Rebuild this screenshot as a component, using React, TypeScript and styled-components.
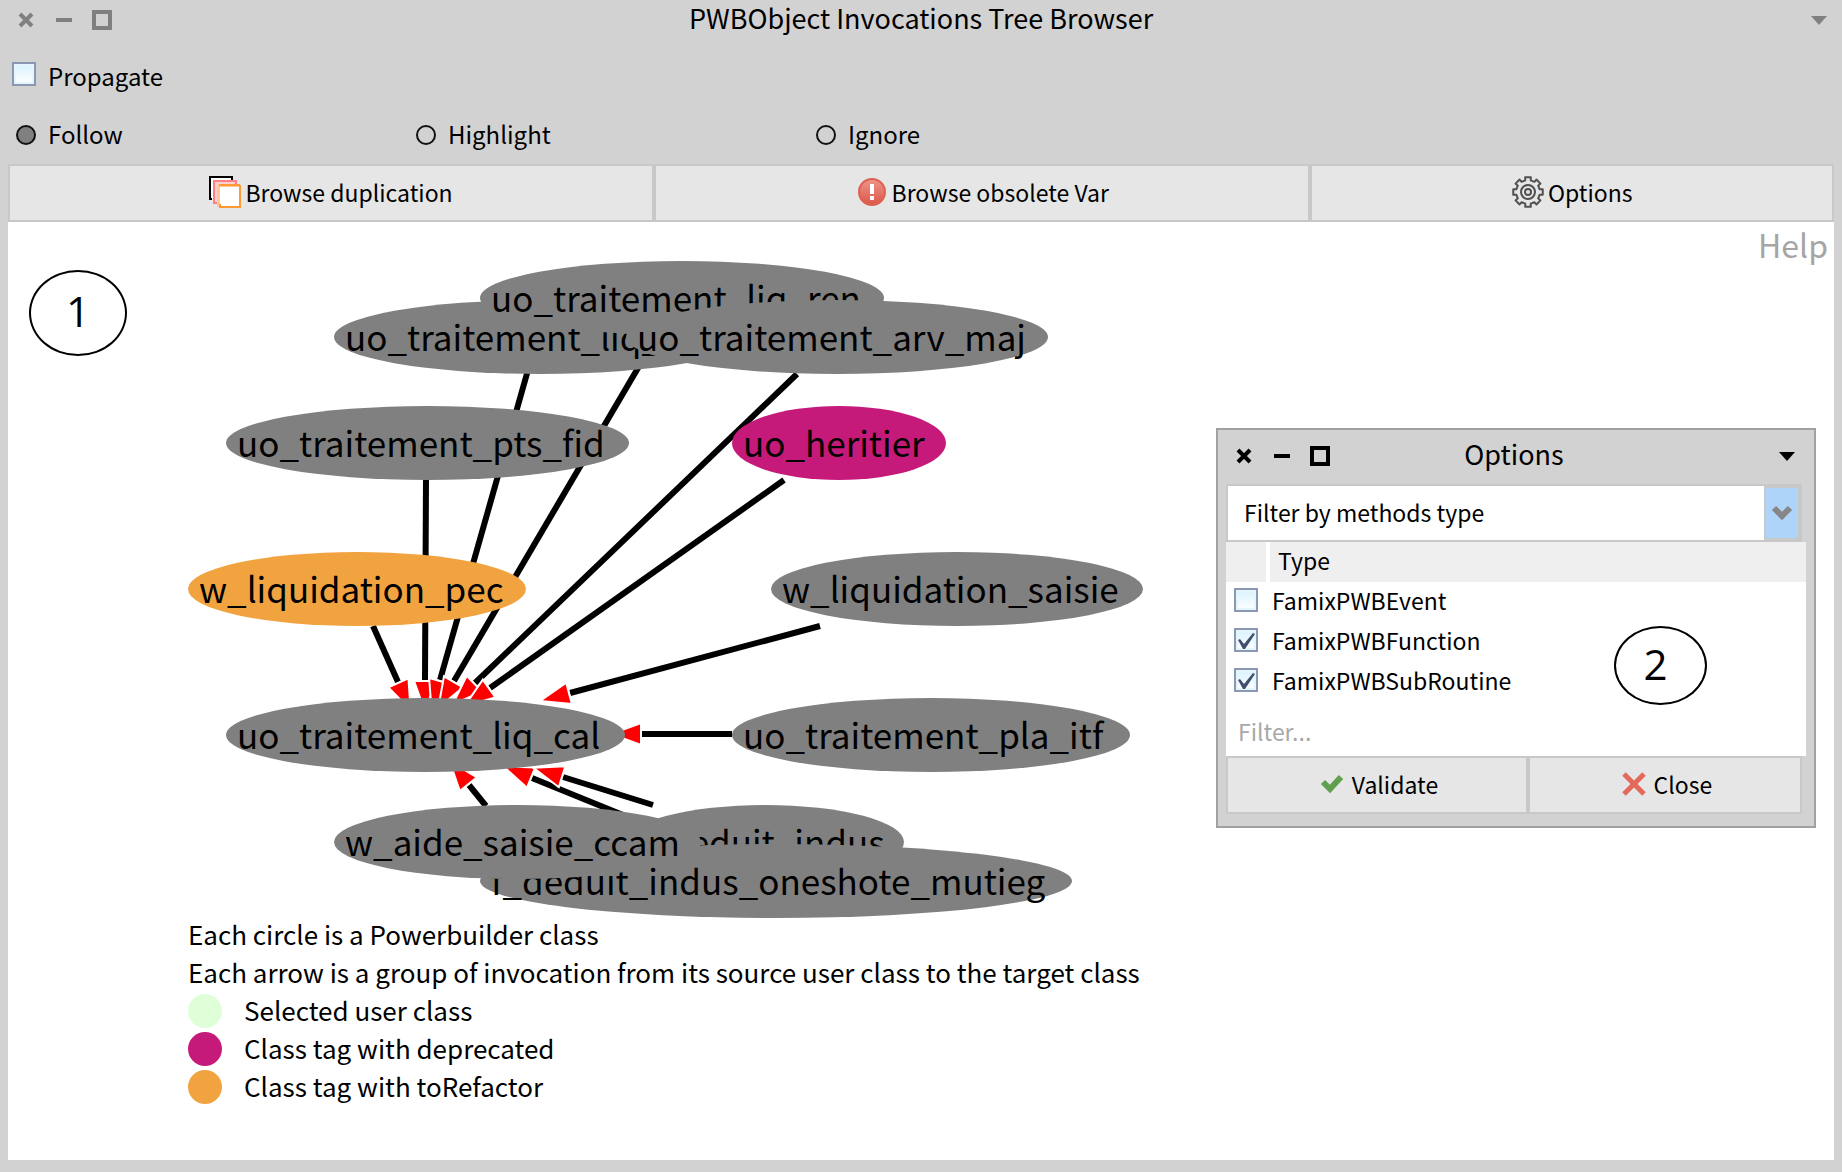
import React, { useState } from "react";
import styled, { createGlobalStyle } from "styled-components";

const GlobalStyle = createGlobalStyle`
  *, *::before, *::after { box-sizing: border-box; }
  body { margin: 0; background: #d2d2d2; }
  body, button, input, select, table {
    font-family: "Noto Sans CJK JP", "Noto Sans", sans-serif;
    font-size: 23px;
    line-height: 32px;
    color: #000;
  }
`;

const Window = styled.div`
  min-height: 100vh;
  display: flex;
  flex-direction: column;
  padding: 0 8px 12px;
  background: #d2d2d2;
`;

const TitleBar = styled.header<{ $tone: string }>`
  display: grid;
  grid-template-columns: 120px 1fr 120px;
  align-items: start;
  height: 48px;
  padding: 10px 0 0;
  color: ${(p) => p.$tone};
`;

const DialogTitleBar = styled(TitleBar)`
  height: 54px;
  padding: 16px 4px 0 0;
`;

const TitleText = styled.h1`
  margin: 0;
  font-size: 27px;
  font-weight: 400;
  line-height: 16px;
  text-align: center;
  color: #000;
`;

const WindowControls = styled.div`
  display: flex;
  gap: 16px;
  padding-left: 8px;
`;

const IconButton = styled.button`
  display: flex;
  padding: 0;
  border: 0;
  background: none;
  color: inherit;
`;

const MenuButton = styled(IconButton)`
  justify-self: end;
  padding: 0 6px 0 0;
`;

const SettingRow = styled.div`
  display: grid;
  grid-template-columns: repeat(3, 400px);
  align-items: center;
  height: 58px;
  padding-left: 4px;
  font-size: 24px;
`;

const Choice = styled.label`
  display: flex;
  align-items: center;
  gap: 12px;
`;

const ChoiceText = styled.span`
  padding-bottom: 2px;
`;

const CheckBox = styled.input.attrs({ type: "checkbox" })`
  appearance: none;
  flex: none;
  width: 24px;
  height: 24px;
  margin: 0;
  border: 2px solid #8b98b1;
  background: linear-gradient(#d9f2fd, #fff);
  box-shadow: inset 0 0 0 2px #e4f5fd;

  &:checked::after {
    content: "";
    display: block;
    width: 20px;
    height: 20px;
    background: #42506e;
    clip-path: polygon(2px 10px, 4px 9px, 8px 14px, 17px 3px, 19px 4px, 9px 19px, 7px 19px);
  }
`;

const RaisedCheckBox = styled(CheckBox)`
  margin-bottom: 6px;
`;

const Radio = styled.input.attrs({ type: "radio" })`
  appearance: none;
  flex: none;
  width: 20px;
  height: 20px;
  margin: 0 0 0 4px;
  border: 2px solid #111;
  border-radius: 50%;

  &:checked {
    background: #808080;
  }
`;

const ButtonRow = styled.div`
  display: flex;
`;

const ActionButton = styled.button`
  flex: 1 1 auto;
  display: flex;
  align-items: center;
  justify-content: center;
  gap: 4px;
  height: 58px;
  padding: 0 0 2px;
  border: 2px solid #c8c8c8;
  border-radius: 0;
  background: #e6e6e6;
`;

const Canvas = styled.main`
  position: relative;
  flex: 1;
  padding-bottom: 54px;
  background: #fff;
`;

const HelpLink = styled.a`
  position: absolute;
  top: 2px;
  right: 6px;
  font-size: 32px;
  line-height: 40px;
  color: #a5a5a5;
  text-decoration: none;
`;

const Graph = styled.div`
  position: relative;
  height: 694px;
`;

const EdgeLayer = styled.svg`
  position: absolute;
  inset: 0;
  width: 100%;
  height: 100%;
`;

const Node = styled.div<{ $x: number; $y: number; $w: number; $fill: string }>`
  position: absolute;
  left: ${(p) => p.$x}px;
  top: ${(p) => p.$y}px;
  width: ${(p) => p.$w}px;
  height: 74px;
  padding: 13px 0 0 11px;
  border-radius: 50%;
  background: ${(p) => p.$fill};
  font-size: 35px;
  line-height: 46px;
  white-space: nowrap;
`;

const Callout = styled.div<{ $x: number; $y: number; $w: number; $h: number; $inset: number }>`
  position: absolute;
  left: ${(p) => p.$x}px;
  top: ${(p) => p.$y}px;
  width: ${(p) => p.$w}px;
  height: ${(p) => p.$h}px;
  display: flex;
  align-items: center;
  justify-content: center;
  padding: 0 ${(p) => p.$inset}px 4px 0;
  border: 2px solid #000;
  border-radius: 50%;
  background: #fff;
  font-family: "Open Sans", sans-serif;
  font-size: 42px;
  line-height: 42px;
`;

const Legend = styled.ul`
  margin: 0;
  padding: 0 0 0 180px;
  list-style: none;
  font-size: 26px;
`;

const LegendItem = styled.li`
  display: flex;
  align-items: center;
  gap: 22px;
  height: 38px;
`;

const LegendText = styled.span`
  padding-bottom: 2px;
`;

const Dot = styled.span<{ $fill: string }>`
  width: 34px;
  height: 34px;
  border-radius: 50%;
  background: ${(p) => p.$fill};
`;

const Dialog = styled.section`
  position: absolute;
  top: 206px;
  right: 18px;
  width: 600px;
  padding: 0 8px 12px;
  border: 2px solid #a0a0a0;
  background: #d2d2d2;
`;

const DialogRow = styled.div`
  margin-right: 4px;
`;

const SelectBox = styled(DialogRow)`
  display: grid;
  height: 58px;
  border: 2px solid #c8c8c8;
  background: #fff;
`;

const Select = styled.select`
  grid-area: 1 / 1;
  appearance: none;
  width: 100%;
  padding: 0 40px 2px 16px;
  border: 0;
  border-radius: 0;
  background: #fff;
`;

const SelectArrow = styled.span`
  grid-area: 1 / 1;
  justify-self: end;
  display: flex;
  align-items: center;
  justify-content: center;
  width: 36px;
  border: 2px solid #c8c8c8;
  background: #afd4fa;
  pointer-events: none;
`;

const TypeTable = styled.table`
  table-layout: fixed;
  width: 100%;
  border-collapse: separate;
  border-spacing: 0;
  background: #fff;

  th, td {
    height: 40px;
    padding: 0 0 4px;
    text-align: left;
    font-weight: 400;
  }
  th { background: #efefef; }
  th:first-child { width: 40px; }
  th:last-child { border-left: 4px solid #fff; padding-left: 8px; }
  td:first-child { padding-left: 8px; }
  td:last-child { padding-left: 6px; }
  td input, label { display: block; }
`;

const FilterInput = styled.input`
  display: block;
  width: 100%;
  height: 54px;
  padding: 4px 12px 0;
  border: 0;
  border-radius: 0;
  background: #fff;

  &::placeholder { color: #a8a8a8; opacity: 1; }
`;

const DialogButtons = styled(DialogRow)`
  display: flex;
`;

const CloseGlyph = () => (
  <svg width="20" height="20" viewBox="0 0 20 20">
    <path d="M4 4L16 16M16 4L4 16" stroke="currentColor" strokeWidth="4" />
  </svg>
);
const MinimizeGlyph = () => (
  <svg width="24" height="20" viewBox="0 0 24 20">
    <path d="M4 10H20" stroke="currentColor" strokeWidth="4" />
  </svg>
);
const MaximizeGlyph = () => (
  <svg width="20" height="20" viewBox="0 0 20 20">
    <rect x="2" y="2" width="16" height="16" fill="none" stroke="currentColor" strokeWidth="4" />
  </svg>
);
const MenuGlyph = () => (
  <svg width="18" height="18" viewBox="0 0 18 18">
    <path d="M1 6H17L9 15Z" fill="currentColor" />
  </svg>
);

const CopyIcon = () => (
  <svg width="32" height="32" viewBox="0 0 32 32">
    <path d="M1 24V1H24V23H1Z" fill="#fff" />
    <path d="M3 23H1V1H23V4" fill="none" stroke="#000" strokeWidth="2" />
    <rect x="5" y="5" width="22" height="22" fill="#ffd0d0" stroke="#ff8080" strokeWidth="2" />
    <rect x="8" y="8" width="23" height="23" fill="#ffc894" />
    <rect x="11" y="11" width="20" height="20" fill="#fff" />
    <path d="M10 31H31V9M10 9H31M11 31V28" fill="none" stroke="#ff9933" strokeWidth="2" />
  </svg>
);

const ErrorIcon = () => (
  <svg width="32" height="32" viewBox="0 0 32 32">
    <defs>
      <linearGradient id="alert" x1="0" y1="0" x2="0" y2="1">
        <stop offset="0" stopColor="#ee968b" />
        <stop offset="1" stopColor="#dc5648" />
      </linearGradient>
    </defs>
    <circle cx="16" cy="16" r="13" fill="url(#alert)" stroke="#dd6254" strokeWidth="2" />
    <path d="M14 8H18V18H14ZM14 20H18V24H14Z" fill="#fff" />
  </svg>
);

const toothed = Array.from({ length: 8 }, (_, i) => {
  const at = (r: number, deg: number) => {
    const a = ((i * 45 + deg - 90) * Math.PI) / 180;
    return `${(16 + r * Math.cos(a)).toFixed(2)} ${(16 + r * Math.sin(a)).toFixed(2)}`;
  };
  return `${at(12, -13)} L${at(15, -11)} L${at(15, 11)} L${at(12, 13)}`;
}).join(" L");

const GearIcon = () => (
  <svg width="32" height="32" viewBox="0 0 32 32" fill="none" stroke="#505050">
    <path d={`M${toothed}Z`} strokeWidth="2" strokeLinejoin="round" />
    <circle cx="16" cy="16" r="7" strokeWidth="2" />
    <circle cx="16" cy="16" r="3" strokeWidth="2" />
  </svg>
);

const CheckIcon = () => (
  <svg width="32" height="32" viewBox="0 0 32 32">
    <path d="M7 12L14 19L25 7" transform="translate(0 2)" fill="none" stroke="#5fa04e" strokeWidth="6" />
  </svg>
);

const CrossIcon = () => (
  <svg width="32" height="32" viewBox="0 0 32 32">
    <path d="M6 6L26 26M26 6L6 26" fill="none" stroke="#e2695b" strokeWidth="5" />
  </svg>
);

const ChevronIcon = () => (
  <svg width="24" height="24" viewBox="0 0 24 24">
    <path d="M4 7L12 15L20 7" fill="none" stroke="#868686" strokeWidth="6" />
  </svg>
);

const GRAY = "#808080";
const DEPRECATED = "#c61a7a";
const REFACTOR = "#f1a340";

const nodes = [
  { name: "uo_traitement_liq_sim", x: 326, y: 78, w: 412, fill: GRAY },
  { name: "uo_traitement_liq_ren", x: 472, y: 39, w: 404, fill: GRAY },
  { name: "uo_traitement_arv_maj", x: 618, y: 78, w: 422, fill: GRAY },
  { name: "uo_traitement_pts_fid", x: 218, y: 184, w: 403, fill: GRAY },
  { name: "uo_heritier", x: 724, y: 184, w: 214, fill: DEPRECATED },
  { name: "w_liquidation_pec", x: 180, y: 330, w: 338, fill: REFACTOR },
  { name: "w_liquidation_saisie", x: 763, y: 330, w: 372, fill: GRAY },
  { name: "uo_traitement_liq_cal", x: 218, y: 476, w: 399, fill: GRAY },
  { name: "uo_traitement_pla_itf", x: 724, y: 476, w: 398, fill: GRAY },
  { name: "f_deduit_indus", x: 618, y: 583, w: 278, fill: GRAY },
  { name: "f_deduit_indus_oneshote_mutieg", x: 472, y: 622, w: 592, fill: GRAY },
  { name: "w_aide_saisie_ccam", x: 326, y: 583, w: 367, fill: GRAY },
];

type Edge = [number, number, number, number];
const edges: Edge[] = [
  [365, 404, 390, 460],
  [418, 256, 417, 458],
  [520, 148, 432, 458],
  [650, 112, 446, 459],
  [789, 152, 467, 461],
  [776, 258, 482, 466],
  [812, 404, 562, 471],
  [724, 512, 634, 512],
  [478, 584, 461, 563],
  [642, 604, 524, 556],
  [645, 583, 555, 555],
];

function arrowHead([x1, y1, x2, y2]: Edge) {
  const len = Math.hypot(x2 - x1, y2 - y1);
  const dx = (x2 - x1) / len;
  const dy = (y2 - y1) / len;
  const point = (along: number, side: number) =>
    `${x2 + dx * along - dy * side},${y2 + dy * along + dx * side}`;
  return [point(1, 11), point(31, 0), point(1, -11)].join(" ");
}

const methodTypes = ["FamixPWBEvent", "FamixPWBFunction", "FamixPWBSubRoutine"];

function Controls() {
  return (
    <WindowControls>
      <IconButton aria-label="Close window"><CloseGlyph /></IconButton>
      <IconButton aria-label="Minimize"><MinimizeGlyph /></IconButton>
      <IconButton aria-label="Maximize"><MaximizeGlyph /></IconButton>
    </WindowControls>
  );
}

function OptionsDialog() {
  const [checked, setChecked] = useState([false, true, true]);
  return (
    <Dialog aria-label="Options">
      <DialogTitleBar $tone="#000">
        <Controls />
        <TitleText as="h2">Options</TitleText>
        <MenuButton aria-label="Window menu"><MenuGlyph /></MenuButton>
      </DialogTitleBar>
      <SelectBox>
        <Select aria-label="Filter kind">
          <option>Filter by methods type</option>
        </Select>
        <SelectArrow><ChevronIcon /></SelectArrow>
      </SelectBox>
      <TypeTable>
        <thead>
          <tr><th /><th>Type</th></tr>
        </thead>
        <tbody>
          {methodTypes.map((name, i) => (
            <tr key={name}>
              <td>
                <CheckBox
                  id={name}
                  checked={checked[i]}
                  onChange={() => setChecked(checked.map((c, j) => (j === i ? !c : c)))}
                />
              </td>
              <td><label htmlFor={name}>{name}</label></td>
            </tr>
          ))}
        </tbody>
      </TypeTable>
      <FilterInput aria-label="Filter" placeholder="Filter..." />
      <DialogButtons>
        <ActionButton><CheckIcon />Validate</ActionButton>
        <ActionButton><CrossIcon />Close</ActionButton>
      </DialogButtons>
      <Callout $x={396} $y={196} $w={93} $h={79} $inset={10}>2</Callout>
    </Dialog>
  );
}

export default function App() {
  const [mode, setMode] = useState("Follow");
  return (
    <>
      <GlobalStyle />
      <Window>
        <TitleBar $tone="#808080">
          <Controls />
          <TitleText>PWBObject Invocations Tree Browser</TitleText>
          <MenuButton aria-label="Window menu"><MenuGlyph /></MenuButton>
        </TitleBar>
        <SettingRow>
          <Choice><RaisedCheckBox /><ChoiceText>Propagate</ChoiceText></Choice>
        </SettingRow>
        <SettingRow>
          {["Follow", "Highlight", "Ignore"].map((m) => (
            <Choice key={m}>
              <Radio name="mode" checked={mode === m} onChange={() => setMode(m)} />
              <ChoiceText>{m}</ChoiceText>
            </Choice>
          ))}
        </SettingRow>
        <ButtonRow>
          <ActionButton><CopyIcon />Browse duplication</ActionButton>
          <ActionButton><ErrorIcon />Browse obsolete Var</ActionButton>
          <ActionButton><GearIcon />Options</ActionButton>
        </ButtonRow>
        <Canvas>
          <Graph>
            <EdgeLayer>
              {edges.map((e) => (
                <g key={e.join()}>
                  <line x1={e[0]} y1={e[1]} x2={e[2]} y2={e[3]} stroke="#000" strokeWidth="6" />
                  <polygon points={arrowHead(e)} fill="#f00" stroke="#fff" strokeWidth="2" />
                </g>
              ))}
            </EdgeLayer>
            {nodes.map((n) => (
              <Node key={n.name} $x={n.x} $y={n.y} $w={n.w} $fill={n.fill}>{n.name}</Node>
            ))}
            <Callout $x={21} $y={48} $w={98} $h={86} $inset={0}>1</Callout>
          </Graph>
          <Legend>
            <LegendItem><LegendText>Each circle is a Powerbuilder class</LegendText></LegendItem>
            <LegendItem><LegendText>Each arrow is a group of invocation from its source user class to the target class</LegendText></LegendItem>
            <LegendItem><Dot $fill="#dfffd9" /><LegendText>Selected user class</LegendText></LegendItem>
            <LegendItem><Dot $fill={DEPRECATED} /><LegendText>Class tag with deprecated</LegendText></LegendItem>
            <LegendItem><Dot $fill={REFACTOR} /><LegendText>Class tag with toRefactor</LegendText></LegendItem>
          </Legend>
          <HelpLink href="#help">Help</HelpLink>
          <OptionsDialog />
        </Canvas>
      </Window>
    </>
  );
}
